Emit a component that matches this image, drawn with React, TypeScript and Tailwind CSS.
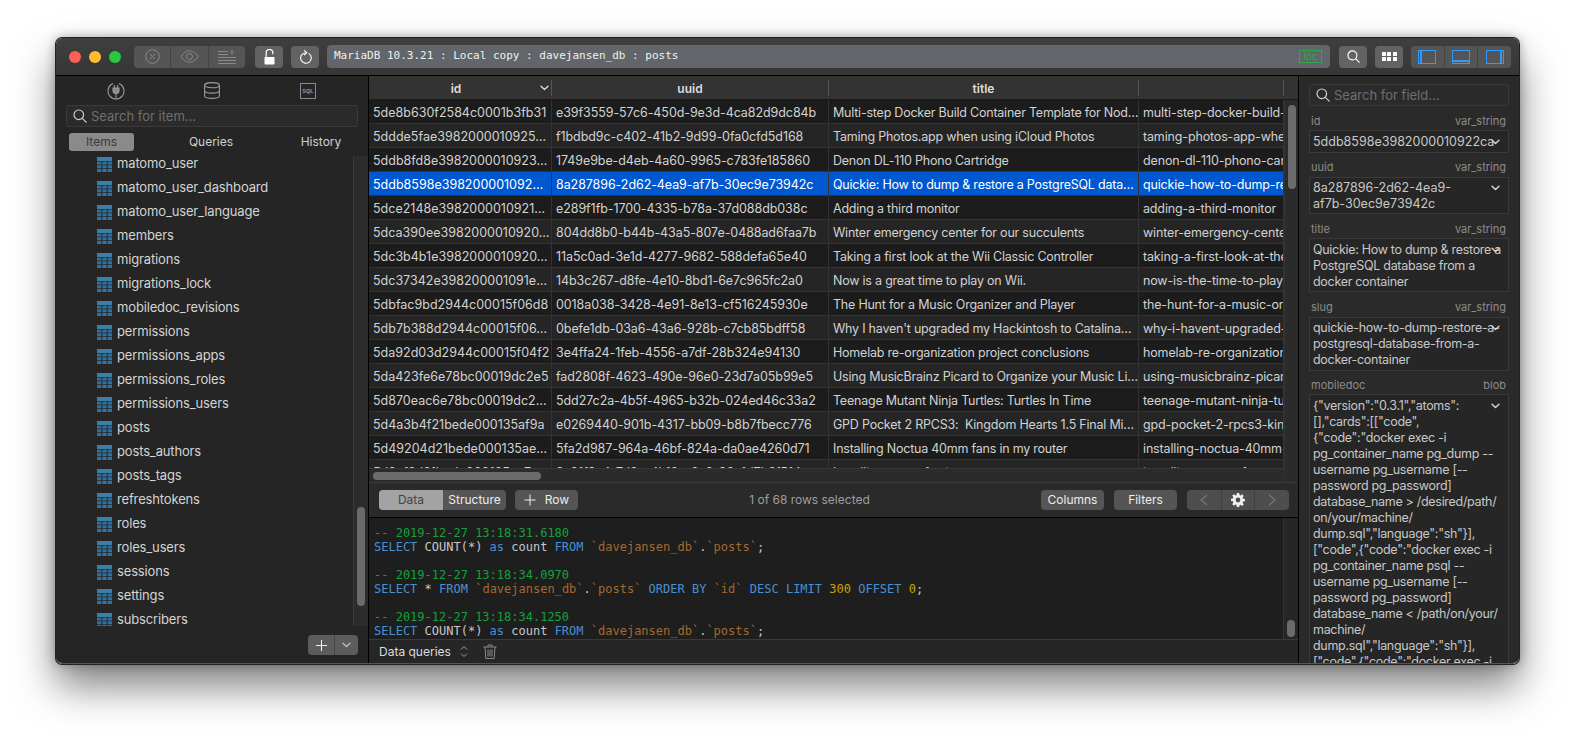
import { ReactNode } from 'react';

const SANS = 'font-["Inter","Liberation_Sans",sans-serif]';

const tables = [
  'matomo_user', 'matomo_user_dashboard', 'matomo_user_language', 'members', 'migrations', 'migrations_lock',
  'mobiledoc_revisions', 'permissions', 'permissions_apps', 'permissions_roles', 'permissions_users', 'posts',
  'posts_authors', 'posts_tags', 'refreshtokens', 'roles', 'roles_users', 'sessions', 'settings', 'subscribers',
];

const rows = [
  ['5de8b630f2584c0001b3fb31', 'e39f3559-57c6-450d-9e3d-4ca82d9dc84b', 'Multi-step Docker Build Container Template for Nod…', 'multi-step-docker-build-container'],
  ['5ddde5fae3982000010925…', 'f1bdbd9c-c402-41b2-9d99-0fa0cfd5d168', 'Taming Photos.app when using iCloud Photos', 'taming-photos-app-when-using'],
  ['5ddb8fd8e3982000010923…', '1749e9be-d4eb-4a60-9965-c783fe185860', 'Denon DL-110 Phono Cartridge', 'denon-dl-110-phono-cartridge'],
  ['5ddb8598e398200001092…', '8a287896-2d62-4ea9-af7b-30ec9e73942c', 'Quickie: How to dump & restore a PostgreSQL data…', 'quickie-how-to-dump-restore'],
  ['5dce2148e3982000010921…', 'e289f1fb-1700-4335-b78a-37d088db038c', 'Adding a third monitor', 'adding-a-third-monitor'],
  ['5dca390ee3982000010920…', '804dd8b0-b44b-43a5-807e-0488ad6faa7b', 'Winter emergency center for our succulents', 'winter-emergency-center-for'],
  ['5dc3b4b1e3982000010920…', '11a5c0ad-3e1d-4277-9682-588defa65e40', 'Taking a first look at the Wii Classic Controller', 'taking-a-first-look-at-the-wii'],
  ['5dc37342e398200001091e…', '14b3c267-d8fe-4e10-8bd1-6e7c965fc2a0', 'Now is a great time to play on Wii.', 'now-is-the-time-to-play-on-wii'],
  ['5dbfac9bd2944c00015f06d8', '0018a038-3428-4e91-8e13-cf516245930e', 'The Hunt for a Music Organizer and Player', 'the-hunt-for-a-music-organizer'],
  ['5db7b388d2944c00015f06…', '0befe1db-03a6-43a6-928b-c7cb85bdff58', "Why I haven't upgraded my Hackintosh to Catalina…", 'why-i-havent-upgraded-my'],
  ['5da92d03d2944c00015f04f2', '3e4ffa24-1feb-4556-a7df-28b324e94130', 'Homelab re-organization project conclusions', 'homelab-re-organization-project'],
  ['5da423fe6e78bc00019dc2e5', 'fad2808f-4623-490e-96e0-23d7a05b99e5', 'Using MusicBrainz Picard to Organize your Music Li…', 'using-musicbrainz-picard-to'],
  ['5d870eac6e78bc00019dc2…', '5dd27c2a-4b5f-4965-b32b-024ed46c33a2', 'Teenage Mutant Ninja Turtles: Turtles In Time', 'teenage-mutant-ninja-turtles'],
  ['5d4a3b4f21bede000135af9a', 'e0269440-901b-4317-bb09-b8b7fbecc776', 'GPD Pocket 2 RPCS3:  Kingdom Hearts 1.5 Final Mi…', 'gpd-pocket-2-rpcs3-kingdom'],
  ['5d49204d21bede000135ae…', '5fa2d987-964a-46bf-824a-da0ae4260d71', 'Installing Noctua 40mm fans in my router', 'installing-noctua-40mm-fans'],
  ['5d3ef2d21bede000135ae7…', '2c91f0a4-7d3e-4b18-a6c2-90e1d7b3f514', 'Installing a new fan in my router', 'installing-a-new-fan'],
];

const colWidths = ['w-[183px]', 'w-[277px]', 'w-[310px]', 'w-[145px]'];
const colText = ['', 'tracking-[-0.08px]', 'tracking-[-0.22px]', 'tracking-[-0.15px]'];

const mobiledoc = [
  '{"version":"0.3.1","atoms":',
  '[],"cards":[["code",',
  '{"code":"docker exec -i',
  'pg_container_name pg_dump --',
  'username pg_username [--',
  'password pg_password]',
  'database_name > /desired/path/',
  'on/your/machine/',
  'dump.sql","language":"sh"}],',
  '["code",{"code":"docker exec -i',
  'pg_container_name psql --',
  'username pg_username [--',
  'password pg_password]',
  'database_name < /path/on/your/',
  'machine/',
  'dump.sql","language":"sh"}],',
  '["code",{"code":"docker exec -i',
];

function TableIcon() {
  return (
    <svg width="15" height="15" viewBox="0 0 15 15" className="shrink-0">
      <rect x="0" y="0" width="15" height="4" fill="#3d7ea8" />
      <g fill="#336f98">
        <rect x="0" y="4.6" width="4.4" height="3" />
        <rect x="5.3" y="4.6" width="4.4" height="3" />
        <rect x="10.6" y="4.6" width="4.4" height="3" />
        <rect x="0" y="8.3" width="4.4" height="3" />
        <rect x="5.3" y="8.3" width="4.4" height="3" />
        <rect x="10.6" y="8.3" width="4.4" height="3" />
        <rect x="0" y="12" width="4.4" height="3" />
        <rect x="5.3" y="12" width="4.4" height="3" />
        <rect x="10.6" y="12" width="4.4" height="3" />
      </g>
    </svg>
  );
}

function SearchIcon({ size = 14, color = '#d0d0d0' }: { size?: number; color?: string }) {
  return (
    <svg width={size} height={size} viewBox="0 0 14 14" fill="none" stroke={color} strokeWidth="1.2" className="shrink-0">
      <circle cx="5.8" cy="5.8" r="4.8" />
      <path d="M9.3 9.3 13.2 13.2" strokeLinecap="round" />
    </svg>
  );
}

function Chevron({ color = '#d8d8d8' }: { color?: string }) {
  return (
    <svg width="9" height="6" viewBox="0 0 9 6" fill="none" stroke={color} strokeWidth="1.4" strokeLinecap="round" strokeLinejoin="round">
      <path d="M1 1.2 4.5 4.6 8 1.2" />
    </svg>
  );
}

function ToolButton({ children }: { children: ReactNode }) {
  return (
    <div className="flex h-[22px] w-[28px] items-center justify-center rounded-[4px] bg-[#636363]">{children}</div>
  );
}

function Toolbar() {
  return (
    <div className="flex h-[38px] shrink-0 items-center border-b border-black bg-gradient-to-b from-[#3f3f3f] to-[#363636] pl-[13px] pr-[8px]">
      <div className="flex gap-2">
        <span className="size-3 rounded-full bg-[#ff5f57]" />
        <span className="size-3 rounded-full bg-[#febc2e]" />
        <span className="size-3 rounded-full bg-[#28c840]" />
      </div>

      {/* disabled group */}
      <div className="ml-[13px] flex h-[22px] w-[111px] rounded-[4px] bg-[#555555]">
        <div className="flex flex-1 items-center justify-center border-r border-[#444444]">
          <svg width="15" height="15" viewBox="0 0 15 15" fill="none" stroke="#8a8a8a" strokeWidth="1">
            <circle cx="7.5" cy="7.5" r="6.8" />
            <path d="M5 5 10 10M10 5 5 10" />
          </svg>
        </div>
        <div className="flex flex-1 items-center justify-center border-r border-[#444444]">
          <svg width="19" height="13" viewBox="0 0 19 13" fill="none" stroke="#8a8a8a" strokeWidth="1">
            <path d="M1 6.5C4 2 6.5.8 9.5.8S15 2 18 6.5C15 11 12.5 12.2 9.5 12.2S4 11 1 6.5Z" />
            <circle cx="9.5" cy="6.5" r="3" />
          </svg>
        </div>
        <div className="flex flex-1 items-center justify-center">
          <svg width="18" height="14" viewBox="0 0 18 14" fill="none" stroke="#8a8a8a" strokeWidth="1">
            <path d="M0 1.5H10M0 4.5H10M0 7.5H18M0 10.5H18M0 13.5H18M14 5V.8M12 2.6 14 .6 16 2.6" />
          </svg>
        </div>
      </div>

      <div className="ml-[10px]">
        <ToolButton>
          <svg width="11" height="16" viewBox="0 0 11 16">
            <path d="M2.2 8V3.8a3.3 3.3 0 0 1 6.6 0v1.4" fill="none" stroke="#fff" strokeWidth="1.2" />
            <rect x="0.5" y="8" width="10" height="7.5" rx="0.8" fill="#fff" />
          </svg>
        </ToolButton>
      </div>
      <div className="ml-[8px]">
        <ToolButton>
          <svg width="13" height="14" viewBox="0 0 13 14" fill="none" stroke="#fff" strokeWidth="1.1" strokeLinecap="round" strokeLinejoin="round">
            <path d="M10 3.6A5.3 5.3 0 1 1 6.4 2.7" />
            <path d="M5.4.6 7.8 2.7 5.4 4.8" />
          </svg>
        </ToolButton>
      </div>

      {/* connection info bar */}
      <div className="ml-[8px] flex h-[23px] w-[1003px] items-center justify-between rounded-[4px] bg-[#62656a] pl-[7px] pr-[8px]">
        <span className='font-["DejaVu_Sans_Mono",monospace] text-[11px] text-[#f0f0f0]'>MariaDB 10.3.21 : Local copy : davejansen_db : posts</span>
        <span className={`${SANS} flex h-[13px] w-[23px] items-center justify-center border border-[#2ea84c] text-[10px] text-[#2ea84c]`}>loc</span>
      </div>

      <div className="ml-[9px]">
        <ToolButton>
          <SearchIcon size={13} color="#ffffff" />
        </ToolButton>
      </div>
      <div className="ml-[8px]">
        <ToolButton>
          <div className="grid grid-cols-3 gap-[1.5px]">
            {[0, 1, 2, 3, 4, 5].map((i) => (
              <span key={i} className="h-[4px] w-[4px] rounded-[0.5px] bg-white" />
            ))}
          </div>
        </ToolButton>
      </div>

      <div className="ml-[8px] flex h-[22px] w-[100px] rounded-[4px] bg-[#555555]">
        {['left', 'bottom', 'right'].map((side, i) => (
          <div key={side} className={`flex flex-1 items-center justify-center ${i < 2 ? 'border-r border-[#444444]' : ''}`}>
            <svg width="18" height="14" viewBox="0 0 18 14" fill="none" stroke="#2f9bff" strokeWidth="1">
              <rect x="0.5" y="0.5" width="17" height="13" />
              {side === 'left' && <rect x="2" y="1" width="2" height="12" fill="#2f9bff" stroke="none" />}
              {side === 'bottom' && <rect x="1" y="10" width="16" height="2" fill="#2f9bff" stroke="none" />}
              {side === 'right' && <rect x="14" y="1" width="2" height="12" fill="#2f9bff" stroke="none" />}
            </svg>
          </div>
        ))}
      </div>
    </div>
  );
}

function Sidebar() {
  return (
    <div className="flex w-[313px] shrink-0 flex-col border-r border-black bg-[#252525]">
      <div className="grid h-[29px] shrink-0 grid-cols-[120px_72px_120px] items-center">
        <div className="flex justify-center">
          <svg width="18" height="18" viewBox="0 0 18 18" fill="none" stroke="#9b9b9b" strokeWidth="1.1">
            <path d="M6 1.6a8 8 0 1 0 6 0" />
            <path d="M9 16.5V12M6 6h6v2.5a3 3 0 0 1-6 0ZM7.4 6V3M10.6 6V3" fill="#8a8a8a" />
          </svg>
        </div>
        <div className="flex justify-center">
          <svg width="16" height="17" viewBox="0 0 16 17" fill="none" stroke="#9b9b9b" strokeWidth="1.1">
            <ellipse cx="8" cy="3.2" rx="7.4" ry="2.6" />
            <path d="M.6 3.2v10.6c0 1.4 3.3 2.6 7.4 2.6s7.4-1.2 7.4-2.6V3.2M.6 8.5c0 1.4 3.3 2.6 7.4 2.6s7.4-1.2 7.4-2.6" />
          </svg>
        </div>
        <div className="flex justify-center">
          <svg width="16" height="16" viewBox="0 0 16 16">
            <rect x="0.5" y="0.5" width="15" height="15" fill="none" stroke="#8a8a8a" />
            <text x="8" y="10" textAnchor="middle" fontSize="5.5" fontWeight="700" fill="#9b9b9b" fontFamily="Liberation Sans">SQL</text>
          </svg>
        </div>
      </div>

      <div className="mx-[10px] flex h-[22px] shrink-0 items-center gap-[4px] rounded-[3px] border border-[#3a3a3a] bg-[#2b2b2b] px-[6px]">
        <SearchIcon />
        <span className={`${SANS} pt-[2px] text-[13px] text-[#6f6f6f]`}>Search for item...</span>
      </div>

      <div className={`${SANS} mt-[6px] ml-[13px] flex h-[18px] shrink-0 items-center text-[12px] text-[#d0d0d0]`}>
        <div className="flex h-[18px] w-[65px] items-center justify-center rounded-[3px] bg-[#8a8a8a] text-[#3a3a3a]">Items</div>
        <div className="w-[154px] text-center">Queries</div>
        <div className="w-[66px] text-center">History</div>
      </div>

      <div className="mt-[5px] flex h-[470px] shrink-0">
        <div className="flex-1 overflow-hidden">
          <div className="mt-[-4px]">
            {tables.map((t) => (
              <div key={t} className={`${SANS} flex h-[24px] items-center gap-[5px] pl-[41px] text-[13px] tracking-[-0.15px] text-[#d4d4d4]`}>
                <TableIcon />
                {t}
              </div>
            ))}
          </div>
        </div>
        <div className="flex w-[15px] flex-col border-l border-[#3a3a3a] bg-[#2c2c2c] pl-[3px]">
          <div className="mt-[351px] h-[99px] w-[8px] rounded-full bg-[#6b6b6b]" />
        </div>
      </div>

      <div className="flex flex-1 items-start justify-end pt-[9px] pr-[10px]">
        <div className="flex h-[20px] w-[50px] rounded-[4px] bg-[#5c5c5c]">
          <div className="flex w-[27px] items-center justify-center border-r border-[#444444]">
            <svg width="13" height="13" viewBox="0 0 13 13" stroke="#f0f0f0" strokeWidth="1.1"><path d="M6.5 1V12M1 6.5H12" /></svg>
          </div>
          <div className="flex flex-1 items-center justify-center"><Chevron color="#bbbbbb" /></div>
        </div>
      </div>
    </div>
  );
}

function DataTable() {
  return (
    <div className="flex h-[406px] shrink-0 flex-col">
      <div className={`${SANS} flex h-[24px] shrink-0 items-center border-b border-[#1a1a1a] bg-[#333333] text-[12px] font-semibold text-[#dedede]`}>
        {['id', 'uuid', 'title', ''].map((label, i) => (
          <div key={i} className={`${colWidths[i]} relative flex h-[16px] items-center justify-center border-r border-[#555555] pt-[2px] ${i === 0 ? 'pr-[8px]' : ''}`}>
            {label}
            {i === 0 && <span className="absolute right-[2px] top-[5px]"><Chevron /></span>}
          </div>
        ))}
      </div>
      <div className="flex min-h-0 flex-1">
        <div className="flex w-[915px] flex-col">
          <div className="h-[368px] overflow-hidden">
            {rows.map((row, r) => (
              <div
                key={row[0]}
                className={`${SANS} flex h-[24px] border-b border-[#333333] text-[12.5px] ${
                  r === 3 ? 'bg-[#0058d0] text-white' : r % 2 === 0 ? 'bg-[#1c1c1c] text-[#d2d2d2]' : 'bg-[#252525] text-[#d2d2d2]'
                }`}
              >
                {row.map((cell, c) => (
                  <div key={c} className={`${colWidths[c]} ${colText[c]} flex items-center overflow-hidden whitespace-pre border-r border-[#333333] pt-[4px] pl-[4px]`}>
                    {cell}
                  </div>
                ))}
              </div>
            ))}
          </div>
          <div className="h-[14px] border-t border-[#383838] bg-[#2b2b2b] pt-[3px] pl-[4px]">
            <div className="h-[8px] w-[168px] rounded-full bg-[#6b6b6b]" />
          </div>
        </div>
        <div className="flex w-[15px] justify-center border-l border-[#333333] bg-[#2b2b2b]">
          <div className="mt-[5px] h-[84px] w-[8px] rounded-full bg-[#6b6b6b]" />
        </div>
      </div>
    </div>
  );
}

function ResultBar() {
  return (
    <div className={`${SANS} flex h-[36px] shrink-0 items-center border-t border-b border-t-[#3a3a3a] border-b-black bg-[#2a2a2a] pl-[10px] text-[12px]`}>
      <div className="flex h-[20px] w-[127px] overflow-hidden rounded-[4px] bg-[#555555] text-[#ececec]">
        <div className="flex w-[64px] items-center justify-center bg-[#a3a3a3] text-[#444444]">Data</div>
        <div className="flex flex-1 items-center justify-center">Structure</div>
      </div>
      <div className="ml-[9px] flex h-[20px] w-[63px] items-center justify-center gap-[9px] rounded-[4px] bg-[#555555] text-[#ececec]">
        <svg width="12" height="12" viewBox="0 0 12 12" stroke="#f0f0f0" strokeWidth="1"><path d="M6 .5V11.5M.5 6H11.5" /></svg>
        Row
      </div>
      <div className="w-[463px] text-center text-[#9d9d9d]">1 of 68 rows selected</div>
      <div className="flex h-[20px] w-[63px] items-center justify-center rounded-[4px] bg-[#555555] text-[#ececec]">Columns</div>
      <div className="ml-[10px] flex h-[20px] w-[63px] items-center justify-center rounded-[4px] bg-[#555555] text-[#ececec]">Filters</div>
      <div className="ml-[10px] flex h-[20px] w-[102px] rounded-[4px] bg-[#4e4e4e]">
        <div className="flex w-[35px] items-center justify-center border-r border-[#404040]">
          <svg width="8" height="12" viewBox="0 0 8 12" fill="none" stroke="#777777" strokeWidth="1.2"><path d="M7 1 1 6l6 5" /></svg>
        </div>
        <div className="flex w-[33px] items-center justify-center border-r border-[#404040]">
          <svg width="14" height="14" viewBox="0 0 14 14" fill="#f0f0f0">
            <path d="M5.8 0h2.4l.3 1.9 1.2.5L11.3 1.3 12.7 3 11.6 4.5l.5 1.2 1.9.3v2.2l-1.9.3-.5 1.2 1.1 1.6-1.4 1.6-1.6-1.1-1.2.5L8.2 14H5.8l-.3-1.9-1.2-.5-1.6 1.1L1.3 11l1.1-1.6-.5-1.2L0 7.9V5.7l1.9-.3.5-1.2L1.3 2.6 3 1.3l1.5 1.1 1.1-.5ZM7 4.6a2.4 2.4 0 1 0 0 4.8 2.4 2.4 0 0 0 0-4.8Z" fillRule="evenodd" />
          </svg>
        </div>
        <div className="flex flex-1 items-center justify-center">
          <svg width="8" height="12" viewBox="0 0 8 12" fill="none" stroke="#777777" strokeWidth="1.2"><path d="M1 1l6 5-6 5" /></svg>
        </div>
      </div>
    </div>
  );
}

function Kw({ children }: { children: ReactNode }) {
  return <span className="text-[#4a90d0]">{children}</span>;
}

function Name({ children }: { children: ReactNode }) {
  return <span className="text-[#a5692f]">{children}</span>;
}

function SqlLog() {
  const count = (
    <>
      <Kw>SELECT</Kw> COUNT(*) <Kw>as</Kw> count <Kw>FROM</Kw> <Name>`davejansen_db`</Name>.<Name>`posts`</Name>;
    </>
  );
  return (
    <div className="flex h-[121px] shrink-0 bg-[#1e1e1e]">
      <div className='w-[915px] overflow-hidden whitespace-pre pt-[8px] pl-[5px] font-["DejaVu_Sans_Mono",monospace] text-[12px] leading-[14px] text-[#c8c8c8]'>
        <div className="text-[#15a03c]">-- 2019-12-27 13:18:31.6180</div>
        <div>{count}</div>
        <div>&nbsp;</div>
        <div className="text-[#15a03c]">-- 2019-12-27 13:18:34.0970</div>
        <div>
          <Kw>SELECT</Kw> * <Kw>FROM</Kw> <Name>`davejansen_db`</Name>.<Name>`posts`</Name> <Kw>ORDER BY</Kw> <Name>`id`</Name> <Kw>DESC LIMIT</Kw> <span className="text-[#c9a400]">300</span> <Kw>OFFSET</Kw> <span className="text-[#c9a400]">0</span>;
        </div>
        <div>&nbsp;</div>
        <div className="text-[#15a03c]">-- 2019-12-27 13:18:34.1250</div>
        <div>{count}</div>
      </div>
      <div className="flex w-[15px] justify-center border-l border-[#333333] bg-[#262626]">
        <div className="mt-[102px] h-[17px] w-[8px] rounded-full bg-[#6b6b6b]" />
      </div>
    </div>
  );
}

function QueryBar() {
  return (
    <div className={`${SANS} flex flex-1 items-center gap-[9px] border-t border-[#3a3a3a] bg-[#262626] pl-[10px] text-[12px] text-[#dcdcdc]`}>
      Data queries
      <svg width="8" height="13" viewBox="0 0 8 13" fill="none" stroke="#a0a0a0" strokeWidth="1"><path d="M1 4.5 4 1.5l3 3M1 8.5l3 3 3-3" /></svg>
      <svg width="14" height="15" viewBox="0 0 14 15" fill="none" stroke="#8a8a8a" strokeWidth="1" className="ml-[6px]">
        <path d="M.5 3H13.5M5 3V1H9V3M2 3l.8 11.5H11.2L12 3M5 5.5V12.5M7 5.5V12.5M9 5.5V12.5" />
      </svg>
    </div>
  );
}

interface FieldProps {
  name: string;
  type: string;
  lines: string[];
  tight?: boolean;
  top: string; // gap above the label
  gap: string; // gap between label and box
  pad: string; // box padding
  chevron: string;
}

function Field({ name, type, lines, tight, top, gap, pad, chevron }: FieldProps) {
  return (
    <div className={`${top} shrink-0`}>
      <div className="flex h-[14px] items-center justify-between pl-[2px] pr-[3px] text-[11px] text-[#8c8c8c]">
        <span>{name}</span>
        <span>{type}</span>
      </div>
      <div className={`relative ${gap} border border-[#3a3a3a] bg-[#262626] pl-[3px] ${pad}`}>
        <div className={`overflow-hidden whitespace-pre text-[12.5px] leading-[16px] text-[#c8c8c8] ${tight ? 'tracking-[-0.3px]' : ''}`}>
          {lines.map((l, i) => <div key={i}>{l}</div>)}
        </div>
        <span className={`absolute right-[8px] ${chevron}`}><Chevron /></span>
      </div>
    </div>
  );
}

function FieldPanel() {
  return (
    <div className={`${SANS} flex w-[220px] shrink-0 flex-col overflow-hidden bg-[#2a2a2a] px-[10px] pt-[8px]`}>
      <div className="flex h-[22px] shrink-0 items-center gap-[4px] rounded-[3px] border border-[#3a3a3a] bg-[#2b2b2b] px-[6px]">
        <SearchIcon />
        <span className="pt-[2px] text-[13px] text-[#6f6f6f]">Search for field...</span>
      </div>
      <Field name="id" type="var_string" top="mt-[8px]" gap="mt-[2px]" pad="pt-[3px] pb-[2px]" chevron="top-[8px]" lines={['5ddb8598e3982000010922ca']} />
      <Field name="uuid" type="var_string" top="mt-[7px]" gap="mt-[3px]" pad="pt-[2px] pb-[1px]" chevron="top-[7px]" lines={['8a287896-2d62-4ea9-', 'af7b-30ec9e73942c']} />
      <Field name="title" type="var_string" tight top="mt-[8px]" gap="mt-[2px]" pad="pt-[3px] pb-[1px]" chevron="top-[8px]" lines={['Quickie: How to dump & restore a', 'PostgreSQL database from a', 'docker container']} />
      <Field name="slug" type="var_string" tight top="mt-[8px]" gap="mt-[3px]" pad="pt-[2px] pb-[2px]" chevron="top-[7px]" lines={['quickie-how-to-dump-restore-a-', 'postgresql-database-from-a-', 'docker-container']} />
      <Field name="mobiledoc" type="blob" tight top="mt-[7px]" gap="mt-[2px]" pad="pt-[3px] pb-[2px]" chevron="top-[8px]" lines={mobiledoc} />
    </div>
  );
}

export default function App() {
  return (
    <div className="h-[737px] w-full overflow-hidden bg-white pt-[38px] pl-[56px]">
      <div className="flex h-[626px] w-[1463px] flex-col overflow-hidden rounded-[6px] border-b border-[#555555] shadow-[0_0_0_1px_#222222,0_22px_40px_rgba(0,0,0,0.5),0_0_12px_rgba(0,0,0,0.35)]">
        <Toolbar />
        <div className="flex min-h-0 flex-1">
          <Sidebar />
          <div className="flex w-[930px] shrink-0 flex-col border-r border-black bg-[#262626]">
            <DataTable />
            <ResultBar />
            <SqlLog />
            <QueryBar />
          </div>
          <FieldPanel />
        </div>
      </div>
    </div>
  );
}
